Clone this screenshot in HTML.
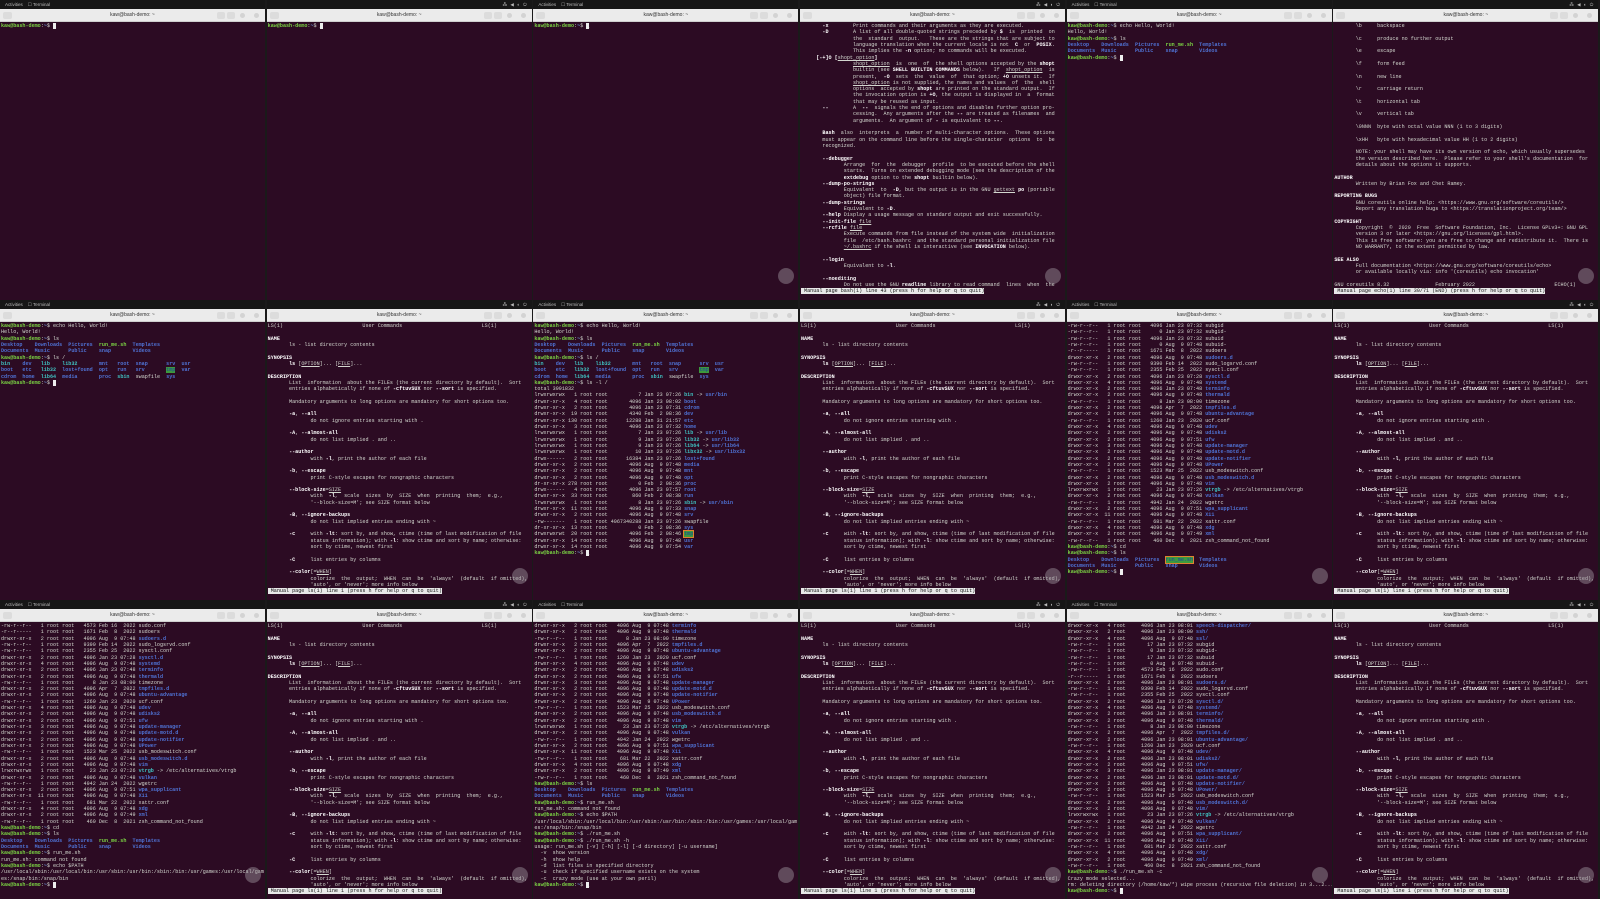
<!DOCTYPE html>
<html><head><meta charset="utf-8">
<style>
*{margin:0;padding:0;box-sizing:border-box}
html,body{width:1600px;height:899px;overflow:hidden;background:#1a1a1a}
.t{position:absolute;width:265px;height:300px;overflow:hidden;background:#2c0b23}
.sys{position:absolute;left:0;top:0;width:100%;height:9px;background:#161616;color:#bbb;font:4.5px "Liberation Sans",sans-serif;line-height:9px;padding-left:5px;white-space:pre}
.sys .r{position:absolute;right:4px;top:0;letter-spacing:1px}
.hd{position:absolute;left:0;top:9px;width:100%;height:13px;background:#ebebeb;border-bottom:1px solid #cfcfcf;font:5px "Liberation Sans",sans-serif;color:#333;text-align:center;line-height:13px}
.hd .l{position:absolute;left:3px;top:3px;width:9px;height:7px;border-radius:2px;background:#dcdcdc}
.hd .ic{position:absolute;top:3px;width:8px;height:7px;border-radius:2px;background:#dcdcdc}
.hd .x{position:absolute;top:4px;width:5px;height:5px;border-radius:50%;background:#d3d3d3}
pre{position:absolute;left:1px;top:23px;font-family:"Liberation Mono",monospace;font-size:5.1px;line-height:6.32px;color:#d3d7cf;white-space:pre}
.g{color:#7bd444;font-weight:bold}.b{color:#6f9be0;font-weight:bold}
.d{color:#4f72d4;font-weight:bold}.c{color:#3fc0c0;font-weight:bold}.w{color:#fff;font-weight:bold}
.gx{color:#7bd444;font-weight:bold}
.hl{background:#3d9a3d;color:#1a3fa0}.or{background:#3d9a3d;color:#1a3fa0;outline:1px solid #e08030}
.st{background:#e8e8e8;color:#111}
.u{text-decoration:underline}
.cur{background:#eee;color:#eee}
.dot{position:absolute;width:16px;height:16px;border-radius:50%;background:rgba(160,150,160,.45);right:4px;bottom:16px}
</style></head><body>

<!-- ROW 1 -->
<div class="t" style="left:0;top:0"><div class="sys">Activities    ☐ Terminal</div><div class="hd"><div class="l"></div>kaw@bash-demo: ~<div class="ic" style="right:40px"></div><div class="ic" style="right:30px"></div><div class="x" style="right:20px"></div><div class="x" style="right:6px"></div></div>
<pre><span class=g>kaw@bash-demo</span>:<span class=b>~</span>$ <span class=cur>_</span></pre><div class="dot" style="opacity:0"></div></div>

<div class="t" style="left:266.67px;top:0"><div class="sys"><span class="r">⁂ ◀ ◐ ⏻</span></div><div class="hd"><div class="l"></div>kaw@bash-demo: ~<div class="ic" style="right:40px"></div><div class="ic" style="right:30px"></div><div class="x" style="right:20px"></div><div class="x" style="right:6px"></div></div>
<pre><span class=g>kaw@bash-demo</span>:<span class=b>~</span>$ <span class=cur>_</span></pre></div>

<div class="t" style="left:533.33px;top:0"><div class="sys">Activities    ☐ Terminal</div><div class="hd"><div class="l"></div>kaw@bash-demo: ~<div class="ic" style="right:40px"></div><div class="ic" style="right:30px"></div><div class="x" style="right:20px"></div><div class="x" style="right:6px"></div></div>
<pre><span class=g>kaw@bash-demo</span>:<span class=b>~</span>$ <span class=cur>_</span></pre><div class="dot"></div></div>

<div class="t" style="left:800px;top:0"><div class="sys"><span class="r">⁂ ◀ ◐ ⏻</span></div><div class="hd"><div class="l"></div>kaw@bash-demo: ~<div class="ic" style="right:40px"></div><div class="ic" style="right:30px"></div><div class="x" style="right:20px"></div><div class="x" style="right:6px"></div></div>
<pre>       <span class=w>-x</span>        Print commands and their arguments as they are executed.
       <span class=w>-D</span>        A list of all double-quoted strings preceded by <span class=w>$</span>  is  printed  on
                 the  standard  output.   These are the strings that are subject to
                 language translation when the current locale is not  <span class=w>C</span>  or  <span class=w>POSIX</span>.
                 This implies the <span class=w>-n</span> option; no commands will be executed.
     <span class=w>[-+]O [</span><span class=u>shopt_option</span><span class=w>]</span>
                 <span class=u>shopt_option</span>  is  one  of  the shell options accepted by the <span class=w>shopt</span>
                 builtin (see <span class=w>SHELL BUILTIN COMMANDS</span> below).   If  <span class=u>shopt_option</span>  is
                 present,  <span class=w>-O</span>  sets  the  value  of  that option; <span class=w>+O</span> unsets it.  If
                 <span class=u>shopt_option</span> is not supplied, the names and values  of  the  shell
                 options  accepted by <span class=w>shopt</span> are printed on the standard output.  If
                 the invocation option is <span class=w>+O</span>, the output is displayed in  a  format
                 that may be reused as input.
       <span class=w>--</span>        A  <span class=w>--</span>  signals the end of options and disables further option pro-
                 cessing.  Any arguments after the <span class=w>--</span> are treated as filenames  and
                 arguments.  An argument of <span class=w>-</span> is equivalent to <span class=w>--</span>.

       <span class=w>Bash</span>  also  interprets  a  number of multi-character options.  These options
       must appear on the command line before the single-character  options  to  be
       recognized.

       <span class=w>--debugger</span>
              Arrange  for  the  debugger  profile  to be executed before the shell
              starts.  Turns on extended debugging mode (see the description of the
              <span class=w>extdebug</span> option to the <span class=w>shopt</span> builtin below).
       <span class=w>--dump-po-strings</span>
              Equivalent  to  <span class=w>-D</span>, but the output is in the GNU <span class=u>gettext</span> <span class=w>po</span> (portable
              object) file format.
       <span class=w>--dump-strings</span>
              Equivalent to <span class=w>-D</span>.
       <span class=w>--help</span> Display a usage message on standard output and exit successfully.
       <span class=w>--init-file</span> <span class=u>file</span>
       <span class=w>--rcfile</span> <span class=u>file</span>
              Execute commands from file instead of the system wide  initialization
              file  /etc/bash.bashrc  and the standard personal initialization file
              <span class=u>~/.bashrc</span> if the shell is interactive (see <span class=w>INVOCATION</span> below).

       <span class=w>--login</span>
              Equivalent to <span class=w>-l</span>.

       <span class=w>--noediting</span>
              Do not use the GNU <span class=w>readline</span> library to read command  lines  when  the
<span class=st> Manual page bash(1) line 43 (press h for help or q to quit)</span></pre><div class="dot"></div></div>

<div class="t" style="left:1066.67px;top:0"><div class="sys">Activities    ☐ Terminal</div><div class="hd"><div class="l"></div>kaw@bash-demo: ~<div class="ic" style="right:40px"></div><div class="ic" style="right:30px"></div><div class="x" style="right:20px"></div><div class="x" style="right:6px"></div></div>
<pre><span class=g>kaw@bash-demo</span>:<span class=b>~</span>$ echo Hello, World!
Hello, World!
<span class=g>kaw@bash-demo</span>:<span class=b>~</span>$ ls
<span class=d>Desktop</span>    <span class=d>Downloads</span>  <span class=d>Pictures</span>  <span class=gx>run_me.sh</span>  <span class=d>Templates</span>
<span class=d>Documents</span>  <span class=d>Music</span>      <span class=d>Public</span>    <span class=d>snap</span>       <span class=d>Videos</span>
<span class=g>kaw@bash-demo</span>:<span class=b>~</span>$ <span class=cur>_</span></pre></div>

<div class="t" style="left:1333.33px;top:0"><div class="sys"><span class="r">⁂ ◀ ◐ ⏻</span></div><div class="hd"><div class="l"></div>kaw@bash-demo: ~<div class="ic" style="right:40px"></div><div class="ic" style="right:30px"></div><div class="x" style="right:20px"></div><div class="x" style="right:6px"></div></div>
<pre>       \b     backspace

       \c     produce no further output

       \e     escape

       \f     form feed

       \n     new line

       \r     carriage return

       \t     horizontal tab

       \v     vertical tab

       \0NNN  byte with octal value NNN (1 to 3 digits)

       \xHH   byte with hexadecimal value HH (1 to 2 digits)

       NOTE: your shell may have its own version of echo, which usually supersedes
       the version described here.  Please refer to your shell's documentation  for
       details about the options it supports.

<span class=w>AUTHOR</span>
       Written by Brian Fox and Chet Ramey.

<span class=w>REPORTING BUGS</span>
       GNU coreutils online help: &lt;https://www.gnu.org/software/coreutils/&gt;
       Report any translation bugs to &lt;https://translationproject.org/team/&gt;

<span class=w>COPYRIGHT</span>
       Copyright  ©  2020  Free  Software Foundation, Inc.  License GPLv3+: GNU GPL
       version 3 or later &lt;https://gnu.org/licenses/gpl.html&gt;.
       This is free software: you are free to change and redistribute it.  There is
       NO WARRANTY, to the extent permitted by law.

<span class=w>SEE ALSO</span>
       Full documentation &lt;https://www.gnu.org/software/coreutils/echo&gt;
       or available locally via: info '(coreutils) echo invocation'

GNU coreutils 8.32               February 2022                          ECHO(1)
<span class=st> Manual page echo(1) line 30/71 (END) (press h for help or q to quit)</span></pre><div class="dot"></div></div>

<!-- ROW 2 -->
<div class="t" style="left:0;top:300px"><div class="sys">Activities    ☐ Terminal</div><div class="hd"><div class="l"></div>kaw@bash-demo: ~<div class="ic" style="right:40px"></div><div class="ic" style="right:30px"></div><div class="x" style="right:20px"></div><div class="x" style="right:6px"></div></div>
<pre><span class=g>kaw@bash-demo</span>:<span class=b>~</span>$ echo Hello, World!
Hello, World!
<span class=g>kaw@bash-demo</span>:<span class=b>~</span>$ ls
<span class=d>Desktop</span>    <span class=d>Downloads</span>  <span class=d>Pictures</span>  <span class=gx>run_me.sh</span>  <span class=d>Templates</span>
<span class=d>Documents</span>  <span class=d>Music</span>      <span class=d>Public</span>    <span class=d>snap</span>       <span class=d>Videos</span>
<span class=g>kaw@bash-demo</span>:<span class=b>~</span>$ ls /
<span class=c>bin</span>    <span class=d>dev</span>   <span class=c>lib</span>    <span class=c>lib32</span>       <span class=d>mnt</span>   <span class=d>root</span>  <span class=d>snap</span>      <span class=d>srv</span>  <span class=d>usr</span>
<span class=d>boot</span>   <span class=d>etc</span>   <span class=c>lib32</span>  <span class=d>lost+found</span>  <span class=d>opt</span>   <span class=d>run</span>   <span class=d>srv</span>       <span class=hl>tmp</span>  <span class=d>var</span>
<span class=d>cdrom</span>  <span class=d>home</span>  <span class=c>lib64</span>  <span class=d>media</span>       <span class=d>proc</span>  <span class=c>sbin</span>  swapfile  <span class=d>sys</span>
<span class=g>kaw@bash-demo</span>:<span class=b>~</span>$ <span class=cur>_</span></pre></div>

<div class="t" style="left:266.67px;top:300px"><div class="sys"><span class="r">⁂ ◀ ◐ ⏻</span></div><div class="hd"><div class="l"></div>kaw@bash-demo: ~<div class="ic" style="right:40px"></div><div class="ic" style="right:30px"></div><div class="x" style="right:20px"></div><div class="x" style="right:6px"></div></div>
<pre class="man">LS(1)                          User Commands                          LS(1)

<span class=w>NAME</span>
       ls - list directory contents

<span class=w>SYNOPSIS</span>
       <span class=w>ls</span> [<span class=u>OPTION</span>]... [<span class=u>FILE</span>]...

<span class=w>DESCRIPTION</span>
       List  information  about the FILEs (the current directory by default).  Sort
       entries alphabetically if none of <span class=w>-cftuvSUX</span> nor <span class=w>--sort</span> is specified.

       Mandatory arguments to long options are mandatory for short options too.

       <span class=w>-a</span>, <span class=w>--all</span>
              do not ignore entries starting with .

       <span class=w>-A</span>, <span class=w>--almost-all</span>
              do not list implied . and ..

       <span class=w>--author</span>
              with <span class=w>-l</span>, print the author of each file

       <span class=w>-b</span>, <span class=w>--escape</span>
              print C-style escapes for nongraphic characters

       <span class=w>--block-size</span>=<span class=u>SIZE</span>
              with  <span class=w>-l</span>,  scale  sizes  by  SIZE  when  printing  them;  e.g.,
              '--block-size=M'; see SIZE format below

       <span class=w>-B</span>, <span class=w>--ignore-backups</span>
              do not list implied entries ending with ~

       <span class=w>-c</span>     with <span class=w>-lt</span>: sort by, and show, ctime (time of last modification of file
              status information); with <span class=w>-l</span>: show ctime and sort by name; otherwise:
              sort by ctime, newest first

       <span class=w>-C</span>     list entries by columns

       <span class=w>--color</span>[=<span class=u>WHEN</span>]
              colorize  the  output;  WHEN  can  be  'always'  (default  if omitted),
              'auto', or 'never'; more info below
<span class=st> Manual page ls(1) line 1 (press h for help or q to quit)</span></pre><div class="dot"></div></div>

<div class="t" style="left:533.33px;top:300px"><div class="sys">Activities    ☐ Terminal</div><div class="hd"><div class="l"></div>kaw@bash-demo: ~<div class="ic" style="right:40px"></div><div class="ic" style="right:30px"></div><div class="x" style="right:20px"></div><div class="x" style="right:6px"></div></div>
<pre><span class=g>kaw@bash-demo</span>:<span class=b>~</span>$ echo Hello, World!
Hello, World!
<span class=g>kaw@bash-demo</span>:<span class=b>~</span>$ ls
<span class=d>Desktop</span>    <span class=d>Downloads</span>  <span class=d>Pictures</span>  <span class=gx>run_me.sh</span>  <span class=d>Templates</span>
<span class=d>Documents</span>  <span class=d>Music</span>      <span class=d>Public</span>    <span class=d>snap</span>       <span class=d>Videos</span>
<span class=g>kaw@bash-demo</span>:<span class=b>~</span>$ ls /
<span class=c>bin</span>    <span class=d>dev</span>   <span class=c>lib</span>    <span class=c>lib32</span>       <span class=d>mnt</span>   <span class=d>root</span>  <span class=d>snap</span>      <span class=d>srv</span>  <span class=d>usr</span>
<span class=d>boot</span>   <span class=d>etc</span>   <span class=c>lib32</span>  <span class=d>lost+found</span>  <span class=d>opt</span>   <span class=d>run</span>   <span class=d>srv</span>       <span class=hl>tmp</span>  <span class=d>var</span>
<span class=d>cdrom</span>  <span class=d>home</span>  <span class=c>lib64</span>  <span class=d>media</span>       <span class=d>proc</span>  <span class=c>sbin</span>  swapfile  <span class=d>sys</span>
<span class=g>kaw@bash-demo</span>:<span class=b>~</span>$ ls -l /
total 3991832
lrwxrwxrwx   1 root root          7 Jan 23 07:26 <span class=c>bin</span> -&gt; <span class=d>usr/bin</span>
drwxr-xr-x   4 root root       4096 Jan 23 08:02 <span class=d>boot</span>
drwxr-xr-x   2 root root       4096 Jan 23 07:31 <span class=d>cdrom</span>
drwxr-xr-x  19 root root       4340 Feb  2 08:36 <span class=d>dev</span>
drwxr-xr-x 130 root root      12288 Jan 31 21:57 <span class=d>etc</span>
drwxr-xr-x   3 root root       4096 Jan 23 07:32 <span class=d>home</span>
lrwxrwxrwx   1 root root          7 Jan 23 07:26 <span class=c>lib</span> -&gt; <span class=d>usr/lib</span>
lrwxrwxrwx   1 root root          9 Jan 23 07:26 <span class=c>lib32</span> -&gt; <span class=d>usr/lib32</span>
lrwxrwxrwx   1 root root          9 Jan 23 07:26 <span class=c>lib64</span> -&gt; <span class=d>usr/lib64</span>
lrwxrwxrwx   1 root root         10 Jan 23 07:26 <span class=c>libx32</span> -&gt; <span class=d>usr/libx32</span>
drwx------   2 root root      16384 Jan 23 07:26 <span class=d>lost+found</span>
drwxr-xr-x   2 root root       4096 Aug  9 07:48 <span class=d>media</span>
drwxr-xr-x   2 root root       4096 Aug  9 07:48 <span class=d>mnt</span>
drwxr-xr-x   2 root root       4096 Aug  9 07:48 <span class=d>opt</span>
dr-xr-xr-x 278 root root          0 Feb  2 08:36 <span class=d>proc</span>
drwx------   4 root root       4096 Jan 23 07:57 <span class=d>root</span>
drwxr-xr-x  33 root root        860 Feb  2 08:38 <span class=d>run</span>
lrwxrwxrwx   1 root root          8 Jan 23 07:26 <span class=c>sbin</span> -&gt; <span class=d>usr/sbin</span>
drwxr-xr-x  11 root root       4096 Aug  9 07:33 <span class=d>snap</span>
drwxr-xr-x   2 root root       4096 Aug  9 07:48 <span class=d>srv</span>
-rw-------   1 root root 4067340288 Jan 23 07:26 swapfile
dr-xr-xr-x  13 root root          0 Feb  2 08:36 <span class=d>sys</span>
drwxrwxrwt  20 root root       4096 Feb  2 08:46 <span class=or>tmp</span>
drwxr-xr-x  14 root root       4096 Aug  9 07:48 <span class=d>usr</span>
drwxr-xr-x  14 root root       4096 Aug  9 07:54 <span class=d>var</span>
<span class=g>kaw@bash-demo</span>:<span class=b>~</span>$ <span class=cur>_</span></pre></div>

<div class="t" style="left:800px;top:300px"><div class="sys"><span class="r">⁂ ◀ ◐ ⏻</span></div><div class="hd"><div class="l"></div>kaw@bash-demo: ~<div class="ic" style="right:40px"></div><div class="ic" style="right:30px"></div><div class="x" style="right:20px"></div><div class="x" style="right:6px"></div></div>
<pre>LS(1)                          User Commands                          LS(1)

<span class=w>NAME</span>
       ls - list directory contents

<span class=w>SYNOPSIS</span>
       <span class=w>ls</span> [<span class=u>OPTION</span>]... [<span class=u>FILE</span>]...

<span class=w>DESCRIPTION</span>
       List  information  about the FILEs (the current directory by default).  Sort
       entries alphabetically if none of <span class=w>-cftuvSUX</span> nor <span class=w>--sort</span> is specified.

       Mandatory arguments to long options are mandatory for short options too.

       <span class=w>-a</span>, <span class=w>--all</span>
              do not ignore entries starting with .

       <span class=w>-A</span>, <span class=w>--almost-all</span>
              do not list implied . and ..

       <span class=w>--author</span>
              with <span class=w>-l</span>, print the author of each file

       <span class=w>-b</span>, <span class=w>--escape</span>
              print C-style escapes for nongraphic characters

       <span class=w>--block-size</span>=<span class=u>SIZE</span>
              with  <span class=w>-l</span>,  scale  sizes  by  SIZE  when  printing  them;  e.g.,
              '--block-size=M'; see SIZE format below

       <span class=w>-B</span>, <span class=w>--ignore-backups</span>
              do not list implied entries ending with ~

       <span class=w>-c</span>     with <span class=w>-lt</span>: sort by, and show, ctime (time of last modification of file
              status information); with <span class=w>-l</span>: show ctime and sort by name; otherwise:
              sort by ctime, newest first

       <span class=w>-C</span>     list entries by columns

       <span class=w>--color</span>[=<span class=u>WHEN</span>]
              colorize  the  output;  WHEN  can  be  'always'  (default  if omitted),
              'auto', or 'never'; more info below
<span class=st> Manual page ls(1) line 1 (press h for help or q to quit)</span></pre><div class="dot"></div></div>

<div class="t" style="left:1066.67px;top:300px"><div class="sys">Activities    ☐ Terminal</div><div class="hd"><div class="l"></div>kaw@bash-demo: ~<div class="ic" style="right:40px"></div><div class="ic" style="right:30px"></div><div class="x" style="right:20px"></div><div class="x" style="right:6px"></div></div>
<pre>-rw-r--r--   1 root root   4096 Jan 23 07:32 subgid
-rw-r--r--   1 root root      0 Jan 23 07:32 subgid-
-rw-r--r--   1 root root   4096 Jan 23 07:32 subuid
-rw-r--r--   1 root root      0 Aug  9 07:48 subuid-
-r--r-----   1 root root   1671 Feb  8  2022 sudoers
drwxr-xr-x   2 root root   4096 Aug  9 07:48 <span class=d>sudoers.d</span>
-rw-r--r--   1 root root   9390 Feb 14  2022 sudo_logsrvd.conf
-rw-r--r--   1 root root   2355 Feb 25  2022 sysctl.conf
drwxr-xr-x   2 root root   4096 Jan 23 07:28 <span class=d>sysctl.d</span>
drwxr-xr-x   4 root root   4096 Aug  9 07:48 <span class=d>systemd</span>
drwxr-xr-x   2 root root   4096 Jan 23 07:48 <span class=d>terminfo</span>
drwxr-xr-x   2 root root   4096 Aug  9 07:48 <span class=d>thermald</span>
-rw-r--r--   1 root root      8 Jan 23 08:00 timezone
drwxr-xr-x   2 root root   4096 Apr  7  2022 <span class=d>tmpfiles.d</span>
drwxr-xr-x   2 root root   4096 Aug  9 07:48 <span class=d>ubuntu-advantage</span>
-rw-r--r--   1 root root   1260 Jan 23  2020 ucf.conf
drwxr-xr-x   4 root root   4096 Aug  9 07:48 <span class=d>udev</span>
drwxr-xr-x   2 root root   4096 Aug  9 07:48 <span class=d>udisks2</span>
drwxr-xr-x   2 root root   4096 Aug  9 07:51 <span class=d>ufw</span>
drwxr-xr-x   3 root root   4096 Aug  9 07:48 <span class=d>update-manager</span>
drwxr-xr-x   2 root root   4096 Aug  9 07:48 <span class=d>update-motd.d</span>
drwxr-xr-x   2 root root   4096 Aug  9 07:48 <span class=d>update-notifier</span>
drwxr-xr-x   2 root root   4096 Aug  9 07:48 <span class=d>UPower</span>
-rw-r--r--   1 root root   1523 Mar 25  2022 usb_modeswitch.conf
drwxr-xr-x   2 root root   4096 Aug  9 07:48 <span class=d>usb_modeswitch.d</span>
drwxr-xr-x   2 root root   4096 Aug  9 07:48 <span class=d>vim</span>
lrwxrwxrwx   1 root root     23 Jan 23 07:26 <span class=c>vtrgb</span> -&gt; /etc/alternatives/vtrgb
drwxr-xr-x   2 root root   4096 Aug  9 07:48 <span class=d>vulkan</span>
-rw-r--r--   1 root root   4942 Jan 24  2022 wgetrc
drwxr-xr-x   2 root root   4096 Aug  9 07:51 <span class=d>wpa_supplicant</span>
drwxr-xr-x  11 root root   4096 Aug  9 07:48 <span class=d>X11</span>
-rw-r--r--   1 root root    681 Mar 22  2022 xattr.conf
drwxr-xr-x   4 root root   4096 Aug  9 07:48 <span class=d>xdg</span>
drwxr-xr-x   2 root root   4096 Aug  9 07:49 <span class=d>xml</span>
-rw-r--r--   1 root root    460 Dec  8  2021 zsh_command_not_found
<span class=g>kaw@bash-demo</span>:<span class=b>~</span>$ cd
<span class=g>kaw@bash-demo</span>:<span class=b>~</span>$ ls
<span class=d>Desktop</span>    <span class=d>Downloads</span>  <span class=d>Pictures</span>  <span class=or>run_me.sh</span>  <span class=d>Templates</span>
<span class=d>Documents</span>  <span class=d>Music</span>      <span class=d>Public</span>    <span class=d>snap</span>       <span class=d>Videos</span>
<span class=g>kaw@bash-demo</span>:<span class=b>~</span>$ <span class=cur>_</span></pre><div class="dot"></div></div>

<div class="t" style="left:1333.33px;top:300px"><div class="sys"><span class="r">⁂ ◀ ◐ ⏻</span></div><div class="hd"><div class="l"></div>kaw@bash-demo: ~<div class="ic" style="right:40px"></div><div class="ic" style="right:30px"></div><div class="x" style="right:20px"></div><div class="x" style="right:6px"></div></div>
<pre>LS(1)                          User Commands                          LS(1)

<span class=w>NAME</span>
       ls - list directory contents

<span class=w>SYNOPSIS</span>
       <span class=w>ls</span> [<span class=u>OPTION</span>]... [<span class=u>FILE</span>]...

<span class=w>DESCRIPTION</span>
       List  information  about the FILEs (the current directory by default).  Sort
       entries alphabetically if none of <span class=w>-cftuvSUX</span> nor <span class=w>--sort</span> is specified.

       Mandatory arguments to long options are mandatory for short options too.

       <span class=w>-a</span>, <span class=w>--all</span>
              do not ignore entries starting with .

       <span class=w>-A</span>, <span class=w>--almost-all</span>
              do not list implied . and ..

       <span class=w>--author</span>
              with <span class=w>-l</span>, print the author of each file

       <span class=w>-b</span>, <span class=w>--escape</span>
              print C-style escapes for nongraphic characters

       <span class=w>--block-size</span>=<span class=u>SIZE</span>
              with  <span class=w>-l</span>,  scale  sizes  by  SIZE  when  printing  them;  e.g.,
              '--block-size=M'; see SIZE format below

       <span class=w>-B</span>, <span class=w>--ignore-backups</span>
              do not list implied entries ending with ~

       <span class=w>-c</span>     with <span class=w>-lt</span>: sort by, and show, ctime (time of last modification of file
              status information); with <span class=w>-l</span>: show ctime and sort by name; otherwise:
              sort by ctime, newest first

       <span class=w>-C</span>     list entries by columns

       <span class=w>--color</span>[=<span class=u>WHEN</span>]
              colorize  the  output;  WHEN  can  be  'always'  (default  if omitted),
              'auto', or 'never'; more info below
<span class=st> Manual page ls(1) line 1 (press h for help or q to quit)</span></pre><div class="dot"></div></div>

<!-- ROW 3 -->
<div class="t" style="left:0;top:600px;height:299px"><div class="sys">Activities    ☐ Terminal</div><div class="hd"><div class="l"></div>kaw@bash-demo: ~<div class="ic" style="right:40px"></div><div class="ic" style="right:30px"></div><div class="x" style="right:20px"></div><div class="x" style="right:6px"></div></div>
<pre>-rw-r--r--   1 root root   4573 Feb 16  2022 sudo.conf
-r--r-----   1 root root   1671 Feb  8  2022 sudoers
drwxr-xr-x   2 root root   4096 Aug  9 07:48 <span class=d>sudoers.d</span>
-rw-r--r--   1 root root   9390 Feb 14  2022 sudo_logsrvd.conf
-rw-r--r--   1 root root   2355 Feb 25  2022 sysctl.conf
drwxr-xr-x   2 root root   4096 Jan 23 07:28 <span class=d>sysctl.d</span>
drwxr-xr-x   4 root root   4096 Aug  9 07:48 <span class=d>systemd</span>
drwxr-xr-x   2 root root   4096 Jan 23 07:48 <span class=d>terminfo</span>
drwxr-xr-x   2 root root   4096 Aug  9 07:48 <span class=d>thermald</span>
-rw-r--r--   1 root root      8 Jan 23 08:00 timezone
drwxr-xr-x   2 root root   4096 Apr  7  2022 <span class=d>tmpfiles.d</span>
drwxr-xr-x   2 root root   4096 Aug  9 07:48 <span class=d>ubuntu-advantage</span>
-rw-r--r--   1 root root   1260 Jan 23  2020 ucf.conf
drwxr-xr-x   4 root root   4096 Aug  9 07:48 <span class=d>udev</span>
drwxr-xr-x   2 root root   4096 Aug  9 07:48 <span class=d>udisks2</span>
drwxr-xr-x   2 root root   4096 Aug  9 07:51 <span class=d>ufw</span>
drwxr-xr-x   3 root root   4096 Aug  9 07:48 <span class=d>update-manager</span>
drwxr-xr-x   2 root root   4096 Aug  9 07:48 <span class=d>update-motd.d</span>
drwxr-xr-x   2 root root   4096 Aug  9 07:48 <span class=d>update-notifier</span>
drwxr-xr-x   2 root root   4096 Aug  9 07:48 <span class=d>UPower</span>
-rw-r--r--   1 root root   1523 Mar 25  2022 usb_modeswitch.conf
drwxr-xr-x   2 root root   4096 Aug  9 07:48 <span class=d>usb_modeswitch.d</span>
drwxr-xr-x   2 root root   4096 Aug  9 07:48 <span class=d>vim</span>
lrwxrwxrwx   1 root root     23 Jan 23 07:26 <span class=c>vtrgb</span> -&gt; /etc/alternatives/vtrgb
drwxr-xr-x   2 root root   4096 Aug  9 07:48 <span class=d>vulkan</span>
-rw-r--r--   1 root root   4942 Jan 24  2022 wgetrc
drwxr-xr-x   2 root root   4096 Aug  9 07:51 <span class=d>wpa_supplicant</span>
drwxr-xr-x  11 root root   4096 Aug  9 07:48 <span class=d>X11</span>
-rw-r--r--   1 root root    681 Mar 22  2022 xattr.conf
drwxr-xr-x   4 root root   4096 Aug  9 07:48 <span class=d>xdg</span>
drwxr-xr-x   2 root root   4096 Aug  9 07:49 <span class=d>xml</span>
-rw-r--r--   1 root root    460 Dec  8  2021 zsh_command_not_found
<span class=g>kaw@bash-demo</span>:<span class=b>~</span>$ cd
<span class=g>kaw@bash-demo</span>:<span class=b>~</span>$ ls
<span class=d>Desktop</span>    <span class=d>Downloads</span>  <span class=d>Pictures</span>  <span class=gx>run_me.sh</span>  <span class=d>Templates</span>
<span class=d>Documents</span>  <span class=d>Music</span>      <span class=d>Public</span>    <span class=d>snap</span>       <span class=d>Videos</span>
<span class=g>kaw@bash-demo</span>:<span class=b>~</span>$ run_me.sh
run_me.sh: command not found
<span class=g>kaw@bash-demo</span>:<span class=b>~</span>$ echo $PATH
/usr/local/sbin:/usr/local/bin:/usr/sbin:/usr/bin:/sbin:/bin:/usr/games:/usr/local/gam
es:/snap/bin:/snap/bin
<span class=g>kaw@bash-demo</span>:<span class=b>~</span>$ <span class=cur>_</span></pre><div class="dot"></div></div>

<div class="t" style="left:266.67px;top:600px;height:299px"><div class="sys"><span class="r">⁂ ◀ ◐ ⏻</span></div><div class="hd"><div class="l"></div>kaw@bash-demo: ~<div class="ic" style="right:40px"></div><div class="ic" style="right:30px"></div><div class="x" style="right:20px"></div><div class="x" style="right:6px"></div></div>
<pre>LS(1)                          User Commands                          LS(1)

<span class=w>NAME</span>
       ls - list directory contents

<span class=w>SYNOPSIS</span>
       <span class=w>ls</span> [<span class=u>OPTION</span>]... [<span class=u>FILE</span>]...

<span class=w>DESCRIPTION</span>
       List  information  about the FILEs (the current directory by default).  Sort
       entries alphabetically if none of <span class=w>-cftuvSUX</span> nor <span class=w>--sort</span> is specified.

       Mandatory arguments to long options are mandatory for short options too.

       <span class=w>-a</span>, <span class=w>--all</span>
              do not ignore entries starting with .

       <span class=w>-A</span>, <span class=w>--almost-all</span>
              do not list implied . and ..

       <span class=w>--author</span>
              with <span class=w>-l</span>, print the author of each file

       <span class=w>-b</span>, <span class=w>--escape</span>
              print C-style escapes for nongraphic characters

       <span class=w>--block-size</span>=<span class=u>SIZE</span>
              with  <span class=w>-l</span>,  scale  sizes  by  SIZE  when  printing  them;  e.g.,
              '--block-size=M'; see SIZE format below

       <span class=w>-B</span>, <span class=w>--ignore-backups</span>
              do not list implied entries ending with ~

       <span class=w>-c</span>     with <span class=w>-lt</span>: sort by, and show, ctime (time of last modification of file
              status information); with <span class=w>-l</span>: show ctime and sort by name; otherwise:
              sort by ctime, newest first

       <span class=w>-C</span>     list entries by columns

       <span class=w>--color</span>[=<span class=u>WHEN</span>]
              colorize  the  output;  WHEN  can  be  'always'  (default  if omitted),
              'auto', or 'never'; more info below
<span class=st> Manual page ls(1) line 1 (press h for help or q to quit)</span></pre><div class="dot"></div></div>

<div class="t" style="left:533.33px;top:600px;height:299px"><div class="sys">Activities    ☐ Terminal</div><div class="hd"><div class="l"></div>kaw@bash-demo: ~<div class="ic" style="right:40px"></div><div class="ic" style="right:30px"></div><div class="x" style="right:20px"></div><div class="x" style="right:6px"></div></div>
<pre>drwxr-xr-x   2 root root   4096 Aug  9 07:48 <span class=d>terminfo</span>
drwxr-xr-x   2 root root   4096 Aug  9 07:48 <span class=d>thermald</span>
-rw-r--r--   1 root root      8 Jan 23 08:00 timezone
drwxr-xr-x   2 root root   4096 Apr  7  2022 <span class=d>tmpfiles.d</span>
drwxr-xr-x   2 root root   4096 Aug  9 07:48 <span class=d>ubuntu-advantage</span>
-rw-r--r--   1 root root   1260 Jan 23  2020 ucf.conf
drwxr-xr-x   4 root root   4096 Aug  9 07:48 <span class=d>udev</span>
drwxr-xr-x   2 root root   4096 Aug  9 07:48 <span class=d>udisks2</span>
drwxr-xr-x   2 root root   4096 Aug  9 07:51 <span class=d>ufw</span>
drwxr-xr-x   3 root root   4096 Aug  9 07:48 <span class=d>update-manager</span>
drwxr-xr-x   2 root root   4096 Aug  9 07:48 <span class=d>update-motd.d</span>
drwxr-xr-x   2 root root   4096 Aug  9 07:48 <span class=d>update-notifier</span>
drwxr-xr-x   2 root root   4096 Aug  9 07:48 <span class=d>UPower</span>
-rw-r--r--   1 root root   1523 Mar 25  2022 usb_modeswitch.conf
drwxr-xr-x   2 root root   4096 Aug  9 07:48 <span class=d>usb_modeswitch.d</span>
drwxr-xr-x   2 root root   4096 Aug  9 07:48 <span class=d>vim</span>
lrwxrwxrwx   1 root root     23 Jan 23 07:26 <span class=c>vtrgb</span> -&gt; /etc/alternatives/vtrgb
drwxr-xr-x   2 root root   4096 Aug  9 07:48 <span class=d>vulkan</span>
-rw-r--r--   1 root root   4942 Jan 24  2022 wgetrc
drwxr-xr-x   2 root root   4096 Aug  9 07:51 <span class=d>wpa_supplicant</span>
drwxr-xr-x  11 root root   4096 Aug  9 07:48 <span class=d>X11</span>
-rw-r--r--   1 root root    681 Mar 22  2022 xattr.conf
drwxr-xr-x   4 root root   4096 Aug  9 07:48 <span class=d>xdg</span>
drwxr-xr-x   2 root root   4096 Aug  9 07:49 <span class=d>xml</span>
-rw-r--r--   1 root root    460 Dec  8  2021 zsh_command_not_found
<span class=g>kaw@bash-demo</span>:<span class=b>~</span>$ ls
<span class=d>Desktop</span>    <span class=d>Downloads</span>  <span class=d>Pictures</span>  <span class=gx>run_me.sh</span>  <span class=d>Templates</span>
<span class=d>Documents</span>  <span class=d>Music</span>      <span class=d>Public</span>    <span class=d>snap</span>       <span class=d>Videos</span>
<span class=g>kaw@bash-demo</span>:<span class=b>~</span>$ run_me.sh
run_me.sh: command not found
<span class=g>kaw@bash-demo</span>:<span class=b>~</span>$ echo $PATH
/usr/local/sbin:/usr/local/bin:/usr/sbin:/usr/bin:/sbin:/bin:/usr/games:/usr/local/gam
es:/snap/bin:/snap/bin
<span class=g>kaw@bash-demo</span>:<span class=b>~</span>$ ./run_me.sh
<span class=g>kaw@bash-demo</span>:<span class=b>~</span>$ ./run_me.sh -h
usage: run_me.sh [-v] [-h] [-l] [-d directory] [-u username]
  -v  show version
  -h  show help
  -d  list files in specified directory
  -u  check if specified username exists on the system
  -c  crazy mode (use at your own peril)
<span class=g>kaw@bash-demo</span>:<span class=b>~</span>$ <span class=cur>_</span></pre><div class="dot"></div></div>

<div class="t" style="left:800px;top:600px;height:299px"><div class="sys"><span class="r">⁂ ◀ ◐ ⏻</span></div><div class="hd"><div class="l"></div>kaw@bash-demo: ~<div class="ic" style="right:40px"></div><div class="ic" style="right:30px"></div><div class="x" style="right:20px"></div><div class="x" style="right:6px"></div></div>
<pre>LS(1)                          User Commands                          LS(1)

<span class=w>NAME</span>
       ls - list directory contents

<span class=w>SYNOPSIS</span>
       <span class=w>ls</span> [<span class=u>OPTION</span>]... [<span class=u>FILE</span>]...

<span class=w>DESCRIPTION</span>
       List  information  about the FILEs (the current directory by default).  Sort
       entries alphabetically if none of <span class=w>-cftuvSUX</span> nor <span class=w>--sort</span> is specified.

       Mandatory arguments to long options are mandatory for short options too.

       <span class=w>-a</span>, <span class=w>--all</span>
              do not ignore entries starting with .

       <span class=w>-A</span>, <span class=w>--almost-all</span>
              do not list implied . and ..

       <span class=w>--author</span>
              with <span class=w>-l</span>, print the author of each file

       <span class=w>-b</span>, <span class=w>--escape</span>
              print C-style escapes for nongraphic characters

       <span class=w>--block-size</span>=<span class=u>SIZE</span>
              with  <span class=w>-l</span>,  scale  sizes  by  SIZE  when  printing  them;  e.g.,
              '--block-size=M'; see SIZE format below

       <span class=w>-B</span>, <span class=w>--ignore-backups</span>
              do not list implied entries ending with ~

       <span class=w>-c</span>     with <span class=w>-lt</span>: sort by, and show, ctime (time of last modification of file
              status information); with <span class=w>-l</span>: show ctime and sort by name; otherwise:
              sort by ctime, newest first

       <span class=w>-C</span>     list entries by columns

       <span class=w>--color</span>[=<span class=u>WHEN</span>]
              colorize  the  output;  WHEN  can  be  'always'  (default  if omitted),
              'auto', or 'never'; more info below
<span class=st> Manual page ls(1) line 1 (press h for help or q to quit)</span></pre><div class="dot"></div></div>

<div class="t" style="left:1066.67px;top:600px;height:299px"><div class="sys">Activities    ☐ Terminal</div><div class="hd"><div class="l"></div>kaw@bash-demo: ~<div class="ic" style="right:40px"></div><div class="ic" style="right:30px"></div><div class="x" style="right:20px"></div><div class="x" style="right:6px"></div></div>
<pre>drwxr-xr-x   4 root     4096 Jan 23 08:01 <span class=d>speech-dispatcher/</span>
drwxr-xr-x   2 root     4096 Jan 23 08:00 <span class=d>ssh/</span>
drwxr-xr-x   4 root     4096 Aug  9 07:48 <span class=d>ssl/</span>
-rw-r--r--   1 root       17 Jan 23 07:32 subgid
-rw-r--r--   1 root        0 Jan 23 07:32 subgid-
-rw-r--r--   1 root       17 Jan 23 07:32 subuid
-rw-r--r--   1 root        0 Aug  9 07:48 subuid-
-rw-r--r--   1 root     4573 Feb 16  2022 sudo.conf
-r--r-----   1 root     1671 Feb  8  2022 sudoers
drwxr-xr-x   2 root     4096 Jan 23 08:01 <span class=d>sudoers.d/</span>
-rw-r--r--   1 root     9390 Feb 14  2022 sudo_logsrvd.conf
-rw-r--r--   1 root     2355 Feb 25  2022 sysctl.conf
drwxr-xr-x   2 root     4096 Jan 23 07:28 <span class=d>sysctl.d/</span>
drwxr-xr-x   4 root     4096 Aug  9 07:48 <span class=d>systemd/</span>
drwxr-xr-x   2 root     4096 Jan 23 08:01 <span class=d>terminfo/</span>
drwxr-xr-x   2 root     4096 Aug  9 07:48 <span class=d>thermald/</span>
-rw-r--r--   1 root        8 Jan 23 08:00 timezone
drwxr-xr-x   2 root     4096 Apr  7  2022 <span class=d>tmpfiles.d/</span>
drwxr-xr-x   2 root     4096 Jan 23 08:01 <span class=d>ubuntu-advantage/</span>
-rw-r--r--   1 root     1260 Jan 23  2020 ucf.conf
drwxr-xr-x   4 root     4096 Aug  9 07:48 <span class=d>udev/</span>
drwxr-xr-x   2 root     4096 Jan 23 08:01 <span class=d>udisks2/</span>
drwxr-xr-x   2 root     4096 Aug  9 07:51 <span class=d>ufw/</span>
drwxr-xr-x   3 root     4096 Jan 23 08:01 <span class=d>update-manager/</span>
drwxr-xr-x   2 root     4096 Jan 23 08:01 <span class=d>update-motd.d/</span>
drwxr-xr-x   2 root     4096 Aug  9 07:48 <span class=d>update-notifier/</span>
drwxr-xr-x   2 root     4096 Aug  9 07:48 <span class=d>UPower/</span>
-rw-r--r--   1 root     1523 Mar 25  2022 usb_modeswitch.conf
drwxr-xr-x   2 root     4096 Aug  9 07:48 <span class=d>usb_modeswitch.d/</span>
drwxr-xr-x   2 root     4096 Aug  9 07:48 <span class=d>vim/</span>
lrwxrwxrwx   1 root       23 Jan 23 07:26 <span class=c>vtrgb</span> -&gt; /etc/alternatives/vtrgb
drwxr-xr-x   2 root     4096 Aug  9 07:48 <span class=d>vulkan/</span>
-rw-r--r--   1 root     4942 Jan 24  2022 wgetrc
drwxr-xr-x   2 root     4096 Aug  9 07:51 <span class=d>wpa_supplicant/</span>
drwxr-xr-x  11 root     4096 Aug  9 07:48 <span class=d>X11/</span>
-rw-r--r--   1 root      681 Mar 22  2022 xattr.conf
drwxr-xr-x   4 root     4096 Aug  9 07:48 <span class=d>xdg/</span>
drwxr-xr-x   2 root     4096 Aug  9 07:49 <span class=d>xml/</span>
-rw-r--r--   1 root      460 Dec  8  2021 zsh_command_not_found
<span class=g>kaw@bash-demo</span>:<span class=b>~</span>$ ./run_me.sh -c
Crazy mode selected...
rm: deleting directory (/home/kaw/*) wipe process (recursive file deletion) in 3...2...1...
<span class=g>kaw@bash-demo</span>:<span class=b>~</span>$ <span class=cur>_</span></pre><div class="dot"></div></div>

<div class="t" style="left:1333.33px;top:600px;height:299px"><div class="sys"><span class="r">⁂ ◀ ◐ ⏻</span></div><div class="hd"><div class="l"></div>kaw@bash-demo: ~<div class="ic" style="right:40px"></div><div class="ic" style="right:30px"></div><div class="x" style="right:20px"></div><div class="x" style="right:6px"></div></div>
<pre>LS(1)                          User Commands                          LS(1)

<span class=w>NAME</span>
       ls - list directory contents

<span class=w>SYNOPSIS</span>
       <span class=w>ls</span> [<span class=u>OPTION</span>]... [<span class=u>FILE</span>]...

<span class=w>DESCRIPTION</span>
       List  information  about the FILEs (the current directory by default).  Sort
       entries alphabetically if none of <span class=w>-cftuvSUX</span> nor <span class=w>--sort</span> is specified.

       Mandatory arguments to long options are mandatory for short options too.

       <span class=w>-a</span>, <span class=w>--all</span>
              do not ignore entries starting with .

       <span class=w>-A</span>, <span class=w>--almost-all</span>
              do not list implied . and ..

       <span class=w>--author</span>
              with <span class=w>-l</span>, print the author of each file

       <span class=w>-b</span>, <span class=w>--escape</span>
              print C-style escapes for nongraphic characters

       <span class=w>--block-size</span>=<span class=u>SIZE</span>
              with  <span class=w>-l</span>,  scale  sizes  by  SIZE  when  printing  them;  e.g.,
              '--block-size=M'; see SIZE format below

       <span class=w>-B</span>, <span class=w>--ignore-backups</span>
              do not list implied entries ending with ~

       <span class=w>-c</span>     with <span class=w>-lt</span>: sort by, and show, ctime (time of last modification of file
              status information); with <span class=w>-l</span>: show ctime and sort by name; otherwise:
              sort by ctime, newest first

       <span class=w>-C</span>     list entries by columns

       <span class=w>--color</span>[=<span class=u>WHEN</span>]
              colorize  the  output;  WHEN  can  be  'always'  (default  if omitted),
              'auto', or 'never'; more info below
<span class=st> Manual page ls(1) line 1 (press h for help or q to quit)</span></pre><div class="dot"></div></div>

</body></html>
